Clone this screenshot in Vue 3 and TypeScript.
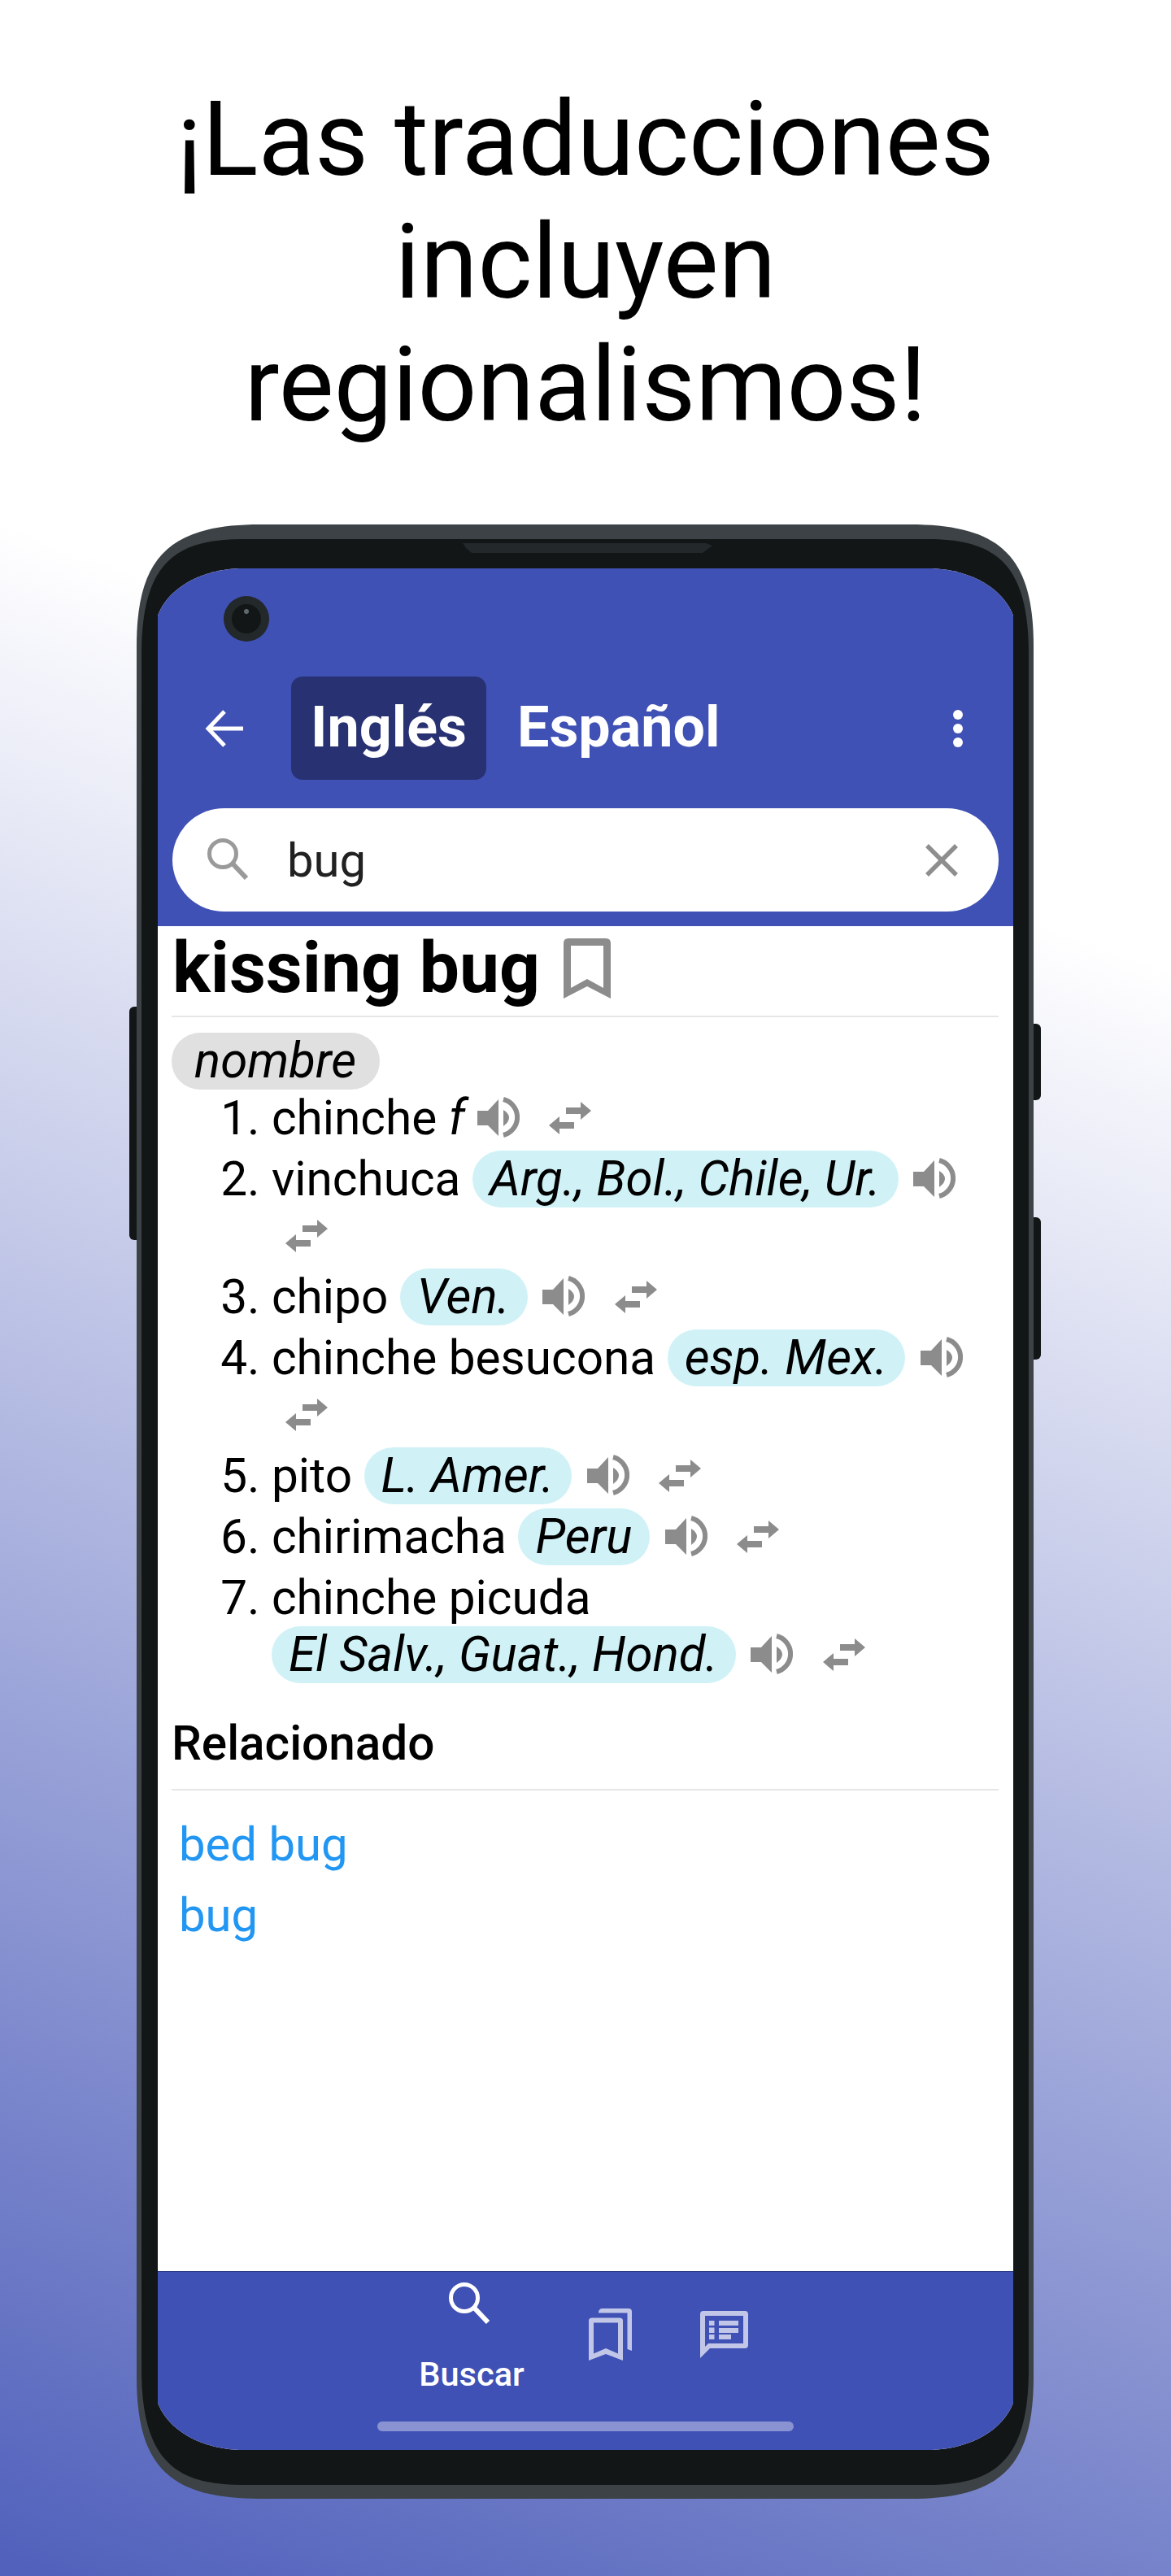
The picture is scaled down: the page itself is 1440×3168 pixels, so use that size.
<script setup lang="ts">
interface Sense { text: string; gender?: string; region?: string }
const senses: Sense[] = [
  { text: 'chinche', gender: 'f' },
  { text: 'vinchuca', region: 'Arg., Bol., Chile, Ur.' },
  { text: 'chipo', region: 'Ven.' },
  { text: 'chinche besucona', region: 'esp. Mex.' },
  { text: 'pito', region: 'L. Amer.' },
  { text: 'chirimacha', region: 'Peru' },
  { text: 'chinche picuda', region: 'El Salv., Guat., Hond.' },
]
</script>

<template>
  <main class="page">
    <h1 class="headline">¡Las traducciones incluyen regionalismos!</h1>
    <section class="phone">
      <svg class="frame" viewBox="0 0 1103 2428" aria-hidden="true">
        <path fill="#3c4245" d="M0 150C0 40 40 0 152 0H951C1063 0 1103 40 1103 150V2278C1103 2388 1063 2428 951 2428H152C40 2428 0 2388 0 2278Z" />
        <path fill="#121617" d="M6 160C6 50 45 18 130 18H973C1058 18 1097 50 1097 160V2268C1097 2378 1058 2411 973 2411H130C45 2411 6 2378 6 2268Z" />
        <path fill="#23282a" d="M401 23H700L708 26L696 35H412L405 29Z" />
      </svg>
      <i class="side-btn left"></i>
      <i class="side-btn right-a"></i>
      <i class="side-btn right-b"></i>

      <div class="screen">
        <header class="appbar">
          <i class="camera"><i class="lens"></i></i>
          <div class="tabs">
            <svg class="back" viewBox="0 0 48 46"><path d="M47 23H5M24 2L4 23L24 44" fill="none" stroke="#fff" stroke-width="5" /></svg>
            <span class="tab active">Inglés</span>
            <span class="tab">Español</span>
            <span class="dots"><i></i><i></i><i></i></span>
          </div>
          <div class="search">
            <svg class="search-icon" viewBox="0 0 51 51"><circle cx="19" cy="19" r="16.5" fill="none" stroke="#9a9a9a" stroke-width="5" /><path d="M31 31L48 49" stroke="#9a9a9a" stroke-width="6" /></svg>
            <span class="query">bug</span>
            <svg class="clear" viewBox="0 0 40 40"><path d="M2 2L38 38M38 2L2 38" stroke="#8e8e8e" stroke-width="5.5" /></svg>
          </div>
        </header>

        <article class="content">
          <div class="title-row">
            <h2 class="term">kissing bug</h2>
            <svg class="mark" viewBox="0 0 58 74"><path fill="#8c8c8c" fill-rule="evenodd" d="M0 74V6Q0 0 6 0H52Q58 0 58 6V74L29 59ZM9 9V61L29 50L49 61V9Z" /></svg>
          </div>
          <span class="pos">nombre</span>
          <ol class="senses">
            <li v-for="s in senses" :key="s.text">
              {{ s.text }}{{ ' ' }}<em v-if="s.gender">{{ s.gender }}</em><span v-if="s.region" class="region">{{ s.region }}</span>{{ ' ' }}<svg class="speaker" viewBox="0 0 52 50"><path fill="#8c8c8c" d="M0 17H13L26 3V48L13 35H0ZM32 16Q39 20 39 25.5Q39 31 32 36Z" /><path d="M32 3A22.7 22.7 0 0 1 32 47" fill="none" stroke="#8c8c8c" stroke-width="6" /></svg>{{ ' ' }}<svg class="swap" viewBox="0 0 52 40"><path fill="#8c8c8c" d="M21 7H39V0L52 11L39 22V15H21ZM31 25H13V18L0 29L13 40V33H31Z" /></svg>
            </li>
          </ol>
          <h3 class="related">Relacionado</h3>
          <a class="link">bed bug</a>
          <a class="link">bug</a>
        </article>

        <nav class="nav">
          <div class="nav-items">
            <div class="nav-item current">
              <svg class="nav-search" viewBox="0 0 51 51"><circle cx="19" cy="19" r="16.5" fill="none" stroke="#fff" stroke-width="5" /><path d="M31 31L48 49" stroke="#fff" stroke-width="6" /></svg>
              <span>Buscar</span>
            </div>
            <div class="nav-item">
              <svg class="nav-marks" viewBox="0 0 53 64"><path fill="#c2c7e8" fill-rule="evenodd" d="M0 64V15Q0 11.5 4 11.5H38Q42 11.5 42 15V64L21 56ZM6 55.5V17.5H36V55.5L21 49ZM12 5.5Q12 0 17 0H49Q53 0 53 4V52L47.5 50V5.5Z" /></svg>
            </div>
            <div class="nav-item">
              <svg class="nav-chat" viewBox="0 0 59 58"><path fill="#c2c7e8" fill-rule="evenodd" d="M0 58V4Q0 0 4 0H55Q59 0 59 4V42Q59 46 55 46H12ZM6 6V44L10 40H53V6ZM11 12H17.5V18H11ZM11 20.5H17.5V27H11ZM11 29H17.5V35H11ZM23 12H47V18H23ZM23 21H47V27H23ZM23 29H38V35H23Z" /></svg>
            </div>
          </div>
          <i class="home"></i>
        </nav>
      </div>
    </section>
  </main>
</template>

<style>
html, body { margin: 0; padding: 0; }
</style>

<style scoped>
.page {
  height: 3168px;
  overflow: hidden;
  box-sizing: border-box;
  padding-top: 96px;
  font-family: Roboto, sans-serif;
  color: #000;
  background: linear-gradient(201deg, #fff 32%, #5060bb 100%);
}
.headline {
  margin: 0 auto;
  width: 1100px;
  text-align: center;
  font-size: 128px;
  line-height: 151px;
  font-weight: 400;
}
.phone {
  position: relative;
  box-sizing: border-box;
  width: 1103px;
  height: 2428px;
  margin: 96px 0 0 168px;
  padding: 54px 25px 60px 26px;
}
.frame { position: absolute; inset: 0; width: 100%; height: 100%; }
.side-btn { position: absolute; background: #121617; }
.side-btn.left { left: -9px; top: 593px; width: 9px; height: 287px; border-radius: 6px 0 0 6px; }
.side-btn.right-a { right: -9px; top: 614px; width: 9px; height: 94px; border-radius: 0 6px 6px 0; }
.side-btn.right-b { right: -9px; top: 852px; width: 9px; height: 175px; border-radius: 0 6px 6px 0; }
.screen {
  position: relative;
  height: 2314px;
  display: flex;
  flex-direction: column;
  background: #fff;
  clip-path: path('M0 58C12 26 50 2 100 0L952 0C1002 2 1040 26 1052 58L1052 2256C1040 2288 1002 2312 952 2314L100 2314C50 2312 12 2288 0 2256Z');
}
.appbar {
  position: relative;
  box-sizing: border-box;
  height: 440px;
  padding: 133px 18px 18px 18px;
  background: #3f51b5;
}
.camera {
  position: absolute;
  left: 81px;
  top: 34px;
  width: 56px;
  height: 56px;
  border-radius: 50%;
  background: #23282a;
  display: flex;
  align-items: center;
  justify-content: center;
}
.lens {
  position: relative;
  width: 36px;
  height: 36px;
  border-radius: 50%;
  background: #121617;
}
.lens::after {
  content: '';
  position: absolute;
  left: 15px;
  top: 6px;
  width: 6px;
  height: 6px;
  border-radius: 50%;
  background: #5f6a6d;
}
.tabs {
  display: flex;
  align-items: center;
  height: 127px;
  margin-bottom: 35px;
  padding-left: 40px;
}
.back { width: 48px; height: 46px; margin-right: 58px; flex: none; }
.tab {
  padding: 0 24px;
  height: 127px;
  line-height: 125px;
  color: #fff;
  font-size: 70px;
  font-weight: 700;
  border-radius: 14px;
}
.tab + .tab { margin-left: 14px; }
.tab.active { background: #283272; }
.dots {
  margin-left: auto;
  margin-right: 44px;
  display: flex;
  flex-direction: column;
  gap: 5px;
}
.dots i { width: 12px; height: 12px; border-radius: 50%; background: #fff; }
.search {
  height: 127px;
  box-sizing: border-box;
  display: flex;
  align-items: center;
  padding: 0 50px 0 43px;
  background: #fff;
  border-radius: 64px;
}
.search-icon { width: 51px; height: 51px; flex: none; margin-bottom: 2px; }
.query { margin-left: 47px; font-size: 58px; color: #212121; }
.clear { width: 40px; height: 40px; margin-left: auto; }
.content {
  flex: 1;
  padding: 0 18px 0 17px;
}
.title-row {
  display: flex;
  align-items: flex-start;
  gap: 29px;
  height: 110px;
  border-bottom: 2px solid #e6e6e6;
  margin-bottom: 19px;
}
.term {
  margin: 0;
  font-size: 87.5px;
  line-height: 102px;
  font-weight: 700;
  padding-left: 1px;
}
.mark { width: 58px; height: 74px; margin-top: 15px; flex: none; }
.pos {
  display: block;
  width: fit-content;
  padding: 0 29px 0 28px;
  line-height: 70px;
  height: 70px;
  font-size: 60px;
  font-style: italic;
  background: #e0e0e0;
  border-radius: 35px;
}
.senses {
  margin: 0;
  padding: 0 0 0 123px;
  font-size: 58.5px;
  line-height: 70px;
}
.senses li { margin-bottom: 5px; }
.senses em { font-style: italic; font-size: 60px; }
.region {
  display: inline-block;
  padding: 0 22px 0 21px;
  margin-right: 4px;
  font-size: 60px;
  font-style: italic;
  background: #d0f2f7;
  border-radius: 35px;
}
.speaker {
  width: 52px;
  height: 50px;
  vertical-align: -4px;
  margin-right: 5px;
}
.swap {
  width: 52px;
  height: 40px;
  margin-left: 17px;
  vertical-align: baseline;
}
.related {
  margin: 39px 0 0;
  font-size: 58.5px;
  font-weight: 500;
  line-height: 70px;
  padding-bottom: 21px;
  border-bottom: 2px solid #e6e6e6;
}
.link {
  display: block;
  margin-left: 9px;
  color: #2196f3;
  font-size: 58px;
  line-height: 87px;
}
.related + .link { margin-top: 23px; }
.nav {
  height: 220px;
  background: #3f51b5;
  border-top: 1px solid #2d3a85;
  box-sizing: border-box;
  display: flex;
  flex-direction: column;
  align-items: center;
}
.nav-items {
  display: flex;
  height: 184px;
  justify-content: center;
}
.nav-item {
  width: 140px;
  display: flex;
  flex-direction: column;
  align-items: center;
}
.nav-item.current { width: 200px; color: #fff; font-size: 41.5px; font-weight: 500; }
.nav-search { width: 51px; height: 51px; margin: 13px 0 37px -5px; flex: none; }
.nav-marks { width: 53px; height: 64px; margin-top: 45px; }
.nav-chat { width: 59px; height: 58px; margin-top: 48px; }
.home {
  width: 512px;
  height: 12px;
  border-radius: 6px;
  background: #8a93d1;
}
</style>
